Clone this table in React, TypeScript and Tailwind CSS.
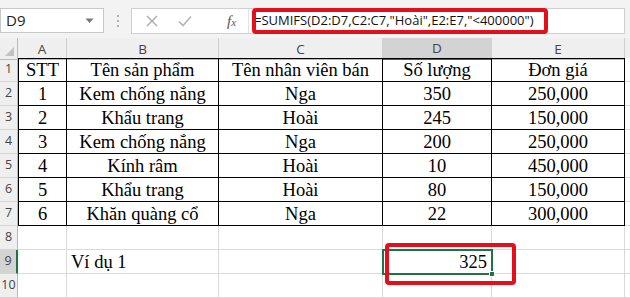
import React from "react";

const rows: string[][] = [
  ["STT", "Tên sản phẩm", "Tên nhân viên bán", "Số lượng", "Đơn giá"],
  ["1", "Kem chống nắng", "Nga", "350", "250,000"],
  ["2", "Khẩu trang", "Hoài", "245", "150,000"],
  ["3", "Kem chống nắng", "Nga", "200", "250,000"],
  ["4", "Kính râm", "Hoài", "10", "450,000"],
  ["5", "Khẩu trang", "Hoài", "80", "150,000"],
  ["6", "Khăn quàng cổ", "Nga", "22", "300,000"],
];

const GRID = "grid grid-cols-[18px_49px_152px_164px_109px_133px_5px]";
const UI_FONT = "font-['Open_Sans','Noto_Sans',sans-serif]";
const CELL_FONT = "font-['Liberation_Serif','Times_New_Roman',serif] text-[18.5px] text-black leading-none";

function RowHead({ n, active }: { n: number; active?: boolean }) {
  return (
    <div
      className={`flex h-[24px] items-center justify-center border-b border-[#d5d5d5] text-[12.5px] text-[#444] ${UI_FONT} ${
        active ? "border-r-2 border-r-[#217346] bg-[#d3d3d3]" : "border-r border-r-[#b9b9b9] bg-[#efefef]"
      }`}
    >
      {n}
    </div>
  );
}

function Blank({ last }: { last?: boolean }) {
  return <div className={`h-[24px] border-b border-[#dadada] ${last ? "" : "border-r"} bg-white`} />;
}

export default function App() {
  return (
    <div className="relative h-[298px] w-[630px] overflow-hidden bg-white">
      {/* formula bar */}
      <div className={`flex h-[38px] items-start bg-[#f3f3f3] pt-[8px] ${UI_FONT}`}>
        <div className="flex h-[25px] w-[104px] items-center justify-between border border-[#c8c8c8] bg-white pl-[5px] pr-[9px] text-[15px] text-[#222]">
          <span>D9</span>
          <svg width="9" height="6" viewBox="0 0 9 6">
            <path d="M0.5 0.5 L8.5 0.5 L4.5 5 Z" fill="#777" />
          </svg>
        </div>
        <div className="flex w-[27px] flex-col items-center justify-center gap-[3px] pt-[7px]">
          <span className="h-[2px] w-[2px] bg-[#b0b0b0]" />
          <span className="h-[2px] w-[2px] bg-[#b0b0b0]" />
          <span className="h-[2px] w-[2px] bg-[#b0b0b0]" />
        </div>
        <div className="flex h-[26px] w-[494px] items-center border border-[#d0d0d0] bg-white">
          <div className="flex w-[116px] items-center">
            <svg className="ml-[14px]" width="12" height="12" viewBox="0 0 12 12">
              <path d="M1 1 L11 11 M11 1 L1 11" stroke="#a9a9a9" strokeWidth="1.4" />
            </svg>
            <svg className="ml-[20px]" width="14" height="12" viewBox="0 0 14 12">
              <path d="M1 6.5 L5 10.5 L13 1.5" stroke="#b4b4b4" strokeWidth="1.6" fill="none" />
            </svg>
            <span className="ml-[35px] font-['Liberation_Serif',serif] text-[15px] italic text-[#555]">
              f<span className="text-[11px]">x</span>
            </span>
          </div>
          <div className="h-full w-px bg-[#e2e2e2]" />
          <span className="pl-[5px] text-[13px] text-[#111]">
            =SUMIFS(D2:D7,C2:C7,"Hoài",E2:E7,"&lt;400000")
          </span>
        </div>
      </div>

      {/* column headings */}
      <div className={`${GRID} h-[20px] ${UI_FONT} text-[13.5px] text-[#444]`}>
        <div className="relative border-b border-r border-[#b9b9b9] bg-[#efefef]">
          <svg className="absolute bottom-[3px] right-[3px]" width="9" height="9" viewBox="0 0 9 9">
            <path d="M9 0 L9 9 L0 9 Z" fill="#c2c2c2" />
          </svg>
        </div>
        {["A", "B", "C", "D", "E"].map((c) => (
          <div
            key={c}
            className={`flex items-center justify-center border-r border-[#d0d0d0] ${
              c === "D" ? "border-b-2 border-b-[#217346] bg-[#d3d3d3]" : "border-b border-b-[#b9b9b9] bg-[#efefef]"
            }`}
          >
            {c}
          </div>
        ))}
        <div className="border-b border-[#b9b9b9] bg-[#efefef]" />
      </div>

      {/* table rows 1-7 */}
      {rows.map((r, i) => (
        <div key={i} className={GRID}>
          <RowHead n={i + 1} />
          {r.map((v, j) => (
            <div
              key={j}
              className={`flex h-[24px] items-center justify-center border-b border-r border-black pt-[1px] ${CELL_FONT} ${
                i === 0 ? "border-t" : ""
              } ${j === 0 ? "border-l" : ""}`}
            >
              {v}
            </div>
          ))}
          <Blank last />
        </div>
      ))}

      {/* row 8 */}
      <div className={GRID}>
        <RowHead n={8} />
        <Blank />
        <Blank />
        <Blank />
        <Blank />
        <Blank />
        <Blank last />
      </div>

      {/* row 9 */}
      <div className={GRID}>
        <RowHead n={9} active />
        <Blank />
        <div className={`flex h-[24px] items-center border-b border-r border-[#dadada] pl-[4px] pt-[1px] ${CELL_FONT}`}>Ví dụ 1</div>
        <Blank />
        <div className={`relative flex h-[24px] items-center justify-end border-b border-r border-[#dadada] pr-[4px] pt-[1px] ${CELL_FONT}`}>
          325
          <div className="absolute left-[-1px] top-[-1px] h-[26px] w-[111px] border-2 border-[#217346]" />
          <div className="absolute bottom-[-4px] right-[-4px] h-[6px] w-[6px] border border-white bg-[#217346]" />
        </div>
        <Blank />
        <Blank last />
      </div>

      {/* row 10 */}
      <div className={GRID}>
        <RowHead n={10} />
        <Blank />
        <Blank />
        <Blank />
        <Blank />
        <Blank />
        <Blank last />
      </div>

      {/* highlight marks */}
      <div className="absolute left-[252px] top-[8px] h-[26px] w-[296px] rounded-[4px] border-[4px] border-[#e3101c]" />
      <div className="absolute left-[385px] top-[243px] h-[42px] w-[131px] rounded-[4px] border-[4px] border-[#e3101c]" />
    </div>
  );
}
